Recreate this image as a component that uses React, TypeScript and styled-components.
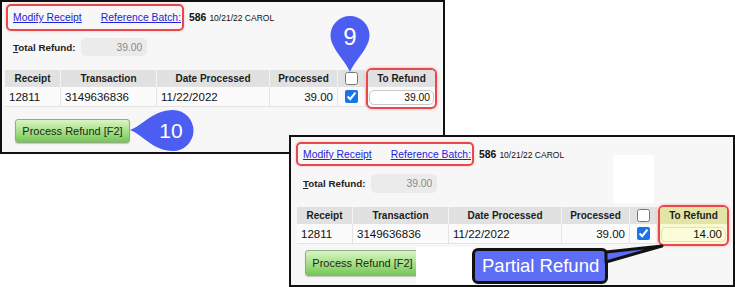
import React from 'react';
import styled, { createGlobalStyle } from 'styled-components';

const PIN = '#4b5ef1';
const CALLOUT = '#5d6ef4';
const MARK = '#e9474c';
const LINK = '#1f22d8';
const FONT = "'Liberation Sans', Arial, sans-serif";

interface Layout {
  x: number;
  y: number;
  w: number;
  h: number;
  padTop: number;
  padLeft: number;
  linkH: number;
  totalGap: number;
  inputH: number;
  tableGap: number;
  tableShift: number;
  buttonGap: number;
  buttonH: number;
}

const before: Layout = {
  x: 0, y: 0, w: 445, h: 154, padTop: 2, padLeft: 4, linkH: 27, totalGap: 7, inputH: 18,
  tableGap: 14, tableShift: -1, buttonGap: 10, buttonH: 24
};

const after: Layout = {
  x: 289, y: 135, w: 446, h: 152, padTop: 5, padLeft: 5, linkH: 24, totalGap: 8, inputH: 19,
  tableGap: 14, tableShift: 1, buttonGap: 4, buttonH: 26
};

const GlobalStyle = createGlobalStyle`
  html, body {
    margin: 0;
    padding: 0;
    background: #fff;
  }

  body {
    font-family: ${FONT};
  }
`;

const Canvas = styled.div`
  position: relative;
  width: 735px;
  height: 287px;
  overflow: hidden;
  background: #fff;
`;

const Window = styled.section<{ $l: Layout }>`
  position: absolute;
  left: ${({ $l }) => $l.x}px;
  top: ${({ $l }) => $l.y}px;
  width: ${({ $l }) => $l.w}px;
  height: ${({ $l }) => $l.h}px;
  box-sizing: border-box;
  border: 2px solid #111;
  background: #f7f7f7;
  padding: ${({ $l }) => `${$l.padTop}px 0 0 ${$l.padLeft}px`};
  display: flex;
  flex-direction: column;
  align-items: flex-start;
`;

const LinkBar = styled.div<{ $h: number }>`
  display: flex;
  align-items: center;
  gap: 5px;
  height: ${({ $h }) => $h}px;
`;

const LinkBox = styled.div`
  display: flex;
  align-items: center;
  gap: 19px;
  height: 100%;
  box-sizing: border-box;
  border: 2px solid ${MARK};
  border-radius: 5px;
  padding: 0 1px 0 5px;
  box-shadow: 0 0 2px rgba(233, 71, 76, 0.45);
`;

const Link = styled.a`
  color: ${LINK};
  font-size: 10.4px;
  text-decoration: underline;
`;

const Batch = styled.span`
  font-size: 10.4px;
  font-weight: bold;
  color: #111;
`;

const BatchMeta = styled.span`
  font-size: 8.5px;
  font-weight: normal;
  margin-left: 3px;
`;

const TotalRow = styled.div<{ $gap: number; $h: number }>`
  display: flex;
  align-items: center;
  gap: 6px;
  margin-top: ${({ $gap }) => $gap}px;
  padding-left: 7px;
  height: ${({ $h }) => $h}px;
`;

const TotalLabel = styled.label`
  font-size: 9.8px;
  font-weight: bold;
  color: #222;
`;

const TotalAmount = styled.input`
  width: 66px;
  height: 100%;
  box-sizing: border-box;
  border: none;
  border-radius: 5px;
  background: #ebebeb;
  color: #8a8a8a;
  font-family: ${FONT};
  font-size: 10.4px;
  text-align: right;
  padding: 0 5px;
`;

const Table = styled.div<{ $gap: number; $shift: number }>`
  display: flex;
  align-items: flex-start;
  margin-top: ${({ $gap }) => $gap}px;
  margin-left: ${({ $shift }) => $shift}px;
`;

const Grid = styled.div`
  display: grid;
  grid-template-columns: 56px 96px 113px 68px 28px;
  grid-template-rows: 17px 20px;
`;

const HeadCell = styled.div`
  display: flex;
  align-items: center;
  justify-content: center;
  background: #e1e1e1;
  border-right: 1px solid #f4f4f4;
  font-size: 10px;
  font-weight: bold;
  color: #1d1d1d;
`;

const Cell = styled.div<{ $align?: 'left' | 'right' | 'center' }>`
  display: flex;
  align-items: center;
  justify-content: ${({ $align = 'left' }) =>
    $align === 'right' ? 'flex-end' : $align === 'center' ? 'center' : 'flex-start'};
  padding: 0 4px;
  background: #fbfbfb;
  border-right: 1px solid #e4e4e4;
  border-bottom: 1px solid #e4e4e4;
  font-size: 11.5px;
  color: #111;
`;

const Check = styled.input.attrs({ type: 'checkbox' })`
  margin: 0;
  width: 13px;
  height: 13px;
  accent-color: #1a73e8;
`;

const RefundColumn = styled.div<{ $hl: boolean }>`
  margin-top: -2px;
  width: 71px;
  box-sizing: border-box;
  border: 2px solid ${MARK};
  border-radius: 6px;
  overflow: hidden;
  display: grid;
  grid-template-rows: 17px 20px;
  box-shadow: 0 0 3px rgba(233, 71, 76, 0.5);
  background: ${({ $hl }) => ($hl ? '#f8f9cf' : '#fbfbfb')};
`;

const RefundHead = styled.div<{ $hl: boolean }>`
  display: flex;
  align-items: center;
  justify-content: center;
  background: ${({ $hl }) => ($hl ? '#e2e5a6' : '#e1e1e1')};
  font-size: 10px;
  font-weight: bold;
  color: #1d1d1d;
`;

const RefundCell = styled.div`
  display: flex;
  align-items: center;
  padding: 0 1px;
`;

const RefundInput = styled.input<{ $hl: boolean }>`
  width: 100%;
  height: 15px;
  box-sizing: border-box;
  border: 1px solid ${({ $hl }) => ($hl ? '#e2e3b8' : '#c9c9c9')};
  border-radius: 5px;
  background: ${({ $hl }) => ($hl ? '#fbfcd8' : '#fff')};
  color: #111;
  font-family: ${FONT};
  font-size: ${({ $hl }) => ($hl ? 11.5 : 10.3)}px;
  text-align: right;
  padding: 0 3px;
`;

const ProcessButton = styled.button<{ $gap: number; $h: number }>`
  margin-top: ${({ $gap }) => $gap}px;
  margin-left: 9px;
  width: 115px;
  height: ${({ $h }) => $h}px;
  padding: 0;
  border: 1px solid #8fae80;
  border-radius: 3px;
  background: linear-gradient(to bottom, #d9f4c7 0%, #ade28f 45%, #76c758 100%);
  box-shadow: 0 1px 1px rgba(0, 0, 0, 0.2);
  font-family: ${FONT};
  font-size: 11px;
  color: #1a2a12;
`;

const Overlay = styled.div<{ $x: number; $y: number; $w: number; $h: number }>`
  position: absolute;
  left: ${({ $x }) => $x}px;
  top: ${({ $y }) => $y}px;
  width: ${({ $w }) => $w}px;
  height: ${({ $h }) => $h}px;
`;

const Mask = styled(Overlay)`
  background: #fff;
`;

const CalloutBox = styled(Overlay)`
  box-sizing: border-box;
  border: 3px solid #111;
  border-radius: 6px;
  background: ${CALLOUT};
  color: #fff;
  font-size: 18.5px;
  display: flex;
  align-items: center;
  padding-left: 7px;
`;

const Tail = styled.svg`
  position: absolute;
  left: 129px;
  top: -8px;
  overflow: visible;
`;

function PinDown ({ label }: { label: string }): React.ReactElement {
  return (
    <svg width='40' height='58' viewBox='0 0 40 58'>
      <path d='M20 57 C15 45 0.5 33 0.5 20.5 A19.5 19.5 0 1 1 39.5 20.5 C39.5 33 25 45 20 57 Z' fill={PIN} />
      <text x='20' y='30' textAnchor='middle' fontSize='24' fill='#fff' fontFamily={FONT}>{label}</text>
    </svg>
  );
}

function PinLeft ({ label }: { label: string }): React.ReactElement {
  return (
    <svg width='65' height='41' viewBox='0 0 65 41'>
      <path d='M0 20 C12 16 23 0 43 0 A20.5 20.5 0 1 1 43 41 C23 41 12 24 0 20 Z' fill={PIN} />
      <text x='41' y='27.5' textAnchor='middle' fontSize='21' fill='#fff' fontFamily={FONT}>{label}</text>
    </svg>
  );
}

interface PanelProps {
  layout: Layout;
  amount: string;
  highlight?: boolean;
  children?: React.ReactNode;
}

function RefundPanel ({ amount, children, highlight = false, layout }: PanelProps): React.ReactElement {
  return (
    <Window $l={layout}>
      <LinkBar $h={layout.linkH}>
        <LinkBox>
          <Link href='#'>Modify Receipt</Link>
          <Link href='#'>Reference Batch:</Link>
        </LinkBox>
        <Batch>586<BatchMeta>10/21/22 CAROL</BatchMeta></Batch>
      </LinkBar>
      <TotalRow $gap={layout.totalGap} $h={layout.inputH}>
        <TotalLabel><u>T</u>otal Refund:</TotalLabel>
        <TotalAmount readOnly value='39.00' />
      </TotalRow>
      <Table $gap={layout.tableGap} $shift={layout.tableShift}>
        <Grid>
          <HeadCell>Receipt</HeadCell>
          <HeadCell>Transaction</HeadCell>
          <HeadCell>Date Processed</HeadCell>
          <HeadCell>Processed</HeadCell>
          <HeadCell><Check readOnly checked={false} /></HeadCell>
          <Cell>12811</Cell>
          <Cell>3149636836</Cell>
          <Cell>11/22/2022</Cell>
          <Cell $align='right'>39.00</Cell>
          <Cell $align='center'><Check readOnly checked /></Cell>
        </Grid>
        <RefundColumn $hl={highlight}>
          <RefundHead $hl={highlight}>To Refund</RefundHead>
          <RefundCell>
            <RefundInput $hl={highlight} readOnly value={amount} />
          </RefundCell>
        </RefundColumn>
      </Table>
      <ProcessButton $gap={layout.buttonGap} $h={layout.buttonH}>Process Refund [F2]</ProcessButton>
      {children}
    </Window>
  );
}

export default function App (): React.ReactElement {
  return (
    <Canvas>
      <GlobalStyle />
      <RefundPanel layout={before} amount='39.00'>
        <Overlay $x={328} $y={13} $w={40} $h={58}><PinDown label='9' /></Overlay>
        <Overlay $x={128} $y={108} $w={65} $h={41}><PinLeft label='10' /></Overlay>
      </RefundPanel>
      <RefundPanel layout={after} amount='14.00' highlight>
        <Mask $x={322} $y={18} $w={41} $h={48} />
        <Mask $x={125} $y={110} $w={59} $h={37} />
        <CalloutBox $x={181} $y={111} $w={136} $h={36}>
          Partial Refund
          <Tail width='62' height='22' viewBox='0 0 62 22'>
            <polygon points='2,9 58,3 2,19' fill={CALLOUT} stroke='#111' strokeWidth='3' strokeLinejoin='round' />
          </Tail>
        </CalloutBox>
      </RefundPanel>
    </Canvas>
  );
}
